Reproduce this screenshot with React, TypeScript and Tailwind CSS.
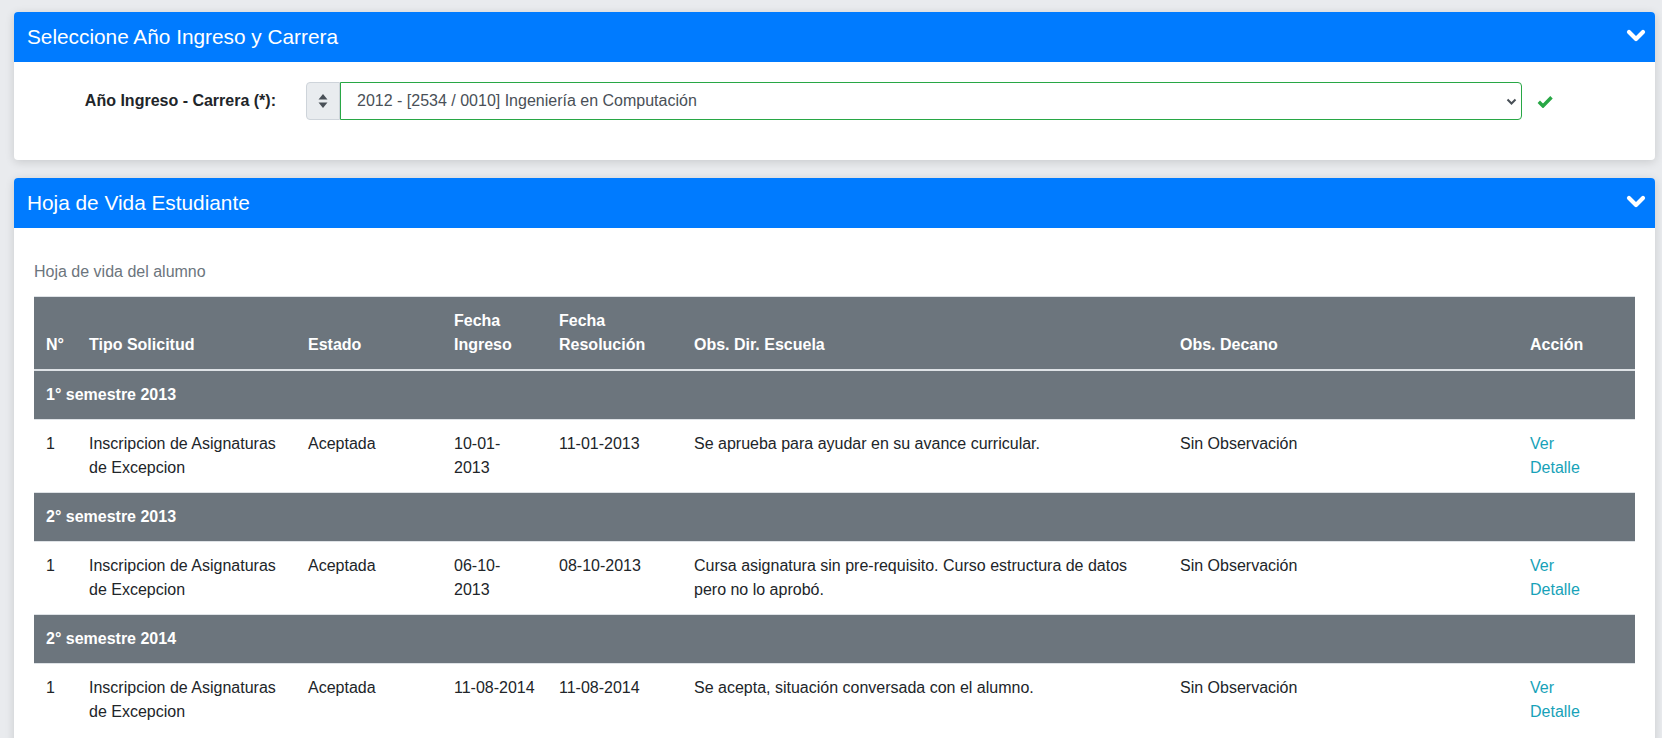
import React from 'react';

type Entry = {
  n: string;
  tipo: React.ReactNode;
  estado: string;
  ingreso: React.ReactNode;
  resolucion: string;
  obsDir: React.ReactNode;
  obsDecano: string;
};

type Group = { title: string; rows: Entry[] };

const tipo = (
  <>
    Inscripcion de Asignaturas
    <br />
    de Excepcion
  </>
);

const groups: Group[] = [
  {
    title: '1° semestre 2013',
    rows: [
      {
        n: '1',
        tipo,
        estado: 'Aceptada',
        ingreso: (
          <>
            10-01-
            <br />
            2013
          </>
        ),
        resolucion: '11-01-2013',
        obsDir: 'Se aprueba para ayudar en su avance curricular.',
        obsDecano: 'Sin Observación',
      },
    ],
  },
  {
    title: '2° semestre 2013',
    rows: [
      {
        n: '1',
        tipo,
        estado: 'Aceptada',
        ingreso: (
          <>
            06-10-
            <br />
            2013
          </>
        ),
        resolucion: '08-10-2013',
        obsDir: (
          <>
            Cursa asignatura sin pre-requisito. Curso estructura de datos
            <br />
            pero no lo aprobó.
          </>
        ),
        obsDecano: 'Sin Observación',
      },
    ],
  },
  {
    title: '2° semestre 2014',
    rows: [
      {
        n: '1',
        tipo,
        estado: 'Aceptada',
        ingreso: '11-08-2014',
        resolucion: '11-08-2014',
        obsDir: 'Se acepta, situación conversada con el alumno.',
        obsDecano: 'Sin Observación',
      },
    ],
  },
];

const ChevronDown: React.FC = () => (
  <svg width="20" height="13" viewBox="0 0 20 13" className="mb-[3px]">
    <path
      d="M3 3 L10 10 L17 3"
      stroke="white"
      strokeWidth="4.2"
      fill="none"
      strokeLinecap="round"
      strokeLinejoin="round"
    />
  </svg>
);

const CardHeader: React.FC<{ title: string }> = ({ title }) => (
  <div className="h-[50px] bg-[#007bff] rounded-t-[4px] flex items-center justify-between pl-[13px] pr-[9px]">
    <span className="text-white text-[20.8px] leading-none">{title}</span>
    <ChevronDown />
  </div>
);

const th = 'px-[12px] py-[12px] text-left align-bottom font-bold border-t border-[#dee2e6]';
const td = 'px-[12px] py-[12px] align-top border-t border-[#dee2e6]';

export default function App() {
  return (
    <div className="min-h-screen bg-[#e9ebee] pl-[14px] pr-[7px] pt-[12px] font-['Liberation_Sans',Arial,sans-serif] text-[16px] leading-[24px] text-[#212529]">
      {/* selector card */}
      <div className="bg-white rounded-[4px] shadow-[0_2px_10px_rgba(0,0,0,0.14)]">
        <CardHeader title="Seleccione Año Ingreso y Carrera" />
        <div className="h-[98px] pt-[20px] flex items-start">
          <label className="w-[262px] h-[38px] flex items-center justify-end font-bold">
            Año Ingreso - Carrera (*):
          </label>
          <div className="ml-[30px] flex h-[38px]">
            <div className="w-[34px] h-full bg-[#e9ecef] border border-[#ced4da] rounded-l-[4px] flex items-center justify-center">
              <svg width="10" height="16" viewBox="0 0 10 16">
                <path d="M5 1 L9.5 6.5 L0.5 6.5 Z" fill="#495057" />
                <path d="M5 15 L9.5 9.5 L0.5 9.5 Z" fill="#495057" />
              </svg>
            </div>
            <div className="w-[1182px] h-full border border-[#28a745] rounded-r-[4px] flex items-center justify-between pl-[16px] pr-[4px] text-[#495057]">
              <span>2012 - [2534 / 0010] Ingeniería en Computación</span>
              <svg width="11" height="7" viewBox="0 0 11 7">
                <path d="M1.5 1.5 L5.5 5.5 L9.5 1.5" stroke="#495057" strokeWidth="2" fill="none" />
              </svg>
            </div>
          </div>
          <div className="ml-[15px] h-[38px] flex items-center">
            <svg width="16" height="13" viewBox="0 0 16 13">
              <path d="M1.8 6.8 L6 11 L14.5 2.2" stroke="#28a745" strokeWidth="3.4" fill="none" />
            </svg>
          </div>
        </div>
      </div>

      {/* hoja de vida card */}
      <div className="mt-[18px] bg-white rounded-[4px] shadow-[0_2px_10px_rgba(0,0,0,0.14)]">
        <CardHeader title="Hoja de Vida Estudiante" />
        <div className="px-[20px] pt-[20px] pb-[20px]">
          <div className="py-[12px] text-[#6c757d]">Hoja de vida del alumno</div>
          <table className="w-full table-fixed">
            <colgroup>
              <col className="w-[43px]" />
              <col className="w-[219px]" />
              <col className="w-[146px]" />
              <col className="w-[105px]" />
              <col className="w-[135px]" />
              <col className="w-[486px]" />
              <col className="w-[350px]" />
              <col className="w-[117px]" />
            </colgroup>
            <thead className="bg-[#6c757d] text-white">
              <tr className="border-b-2 border-[#dee2e6]">
                <th className={th}>N°</th>
                <th className={th}>Tipo Solicitud</th>
                <th className={th}>Estado</th>
                <th className={th}>
                  Fecha
                  <br />
                  Ingreso
                </th>
                <th className={th}>
                  Fecha
                  <br />
                  Resolución
                </th>
                <th className={th}>Obs. Dir. Escuela</th>
                <th className={th}>Obs. Decano</th>
                <th className={th}>Acción</th>
              </tr>
            </thead>
            <tbody>
              {groups.map((g) => (
                <React.Fragment key={g.title}>
                  <tr className="bg-[#6c757d] text-white">
                    <td colSpan={8} className={`${td} font-bold`}>
                      {g.title}
                    </td>
                  </tr>
                  {g.rows.map((r, i) => (
                    <tr key={i}>
                      <td className={td}>{r.n}</td>
                      <td className={td}>{r.tipo}</td>
                      <td className={td}>{r.estado}</td>
                      <td className={`${td} whitespace-nowrap`}>{r.ingreso}</td>
                      <td className={td}>{r.resolucion}</td>
                      <td className={td}>{r.obsDir}</td>
                      <td className={td}>{r.obsDecano}</td>
                      <td className={td}>
                        <a href="#" className="text-[#17a2b8]">
                          Ver
                          <br />
                          Detalle
                        </a>
                      </td>
                    </tr>
                  ))}
                </React.Fragment>
              ))}
            </tbody>
          </table>
        </div>
      </div>
    </div>
  );
}
